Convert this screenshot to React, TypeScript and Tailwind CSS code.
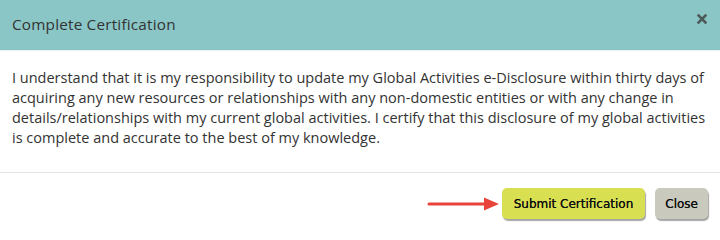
import React from "react";

export default function App() {
  return (
    <div className="w-[720px] h-[234px] bg-white overflow-hidden" style={{ fontFamily: '"Open Sans", sans-serif' }}>
      <div className="h-[51px] bg-[#8ac6c6] flex items-center justify-between pl-3 pr-[12px] border-b border-[#e8f0f0]">
        <h1 className="text-[15.3px] text-[#333] font-normal tracking-[0.2px] -mt-[2px]">Complete Certification</h1>
        <svg width="10" height="10" viewBox="0 0 10 10" className="-mt-[13px] mr-[1px]">
          <path d="M1.5 1.5 L8.5 8.5 M8.5 1.5 L1.5 8.5" stroke="#4d5a5a" strokeWidth="2.6" strokeLinecap="square" />
        </svg>
      </div>
      <div className="px-3 pt-[17px] h-[122px] border-b border-[#e5e5e5] text-[14.5px] leading-[20px] text-[#333] whitespace-nowrap">
        I understand that it is my responsibility to update my Global Activities e-Disclosure within thirty days of<br />
        acquiring any new resources or relationships with any non-domestic entities or with any change in<br />
        details/relationships with my current global activities. I certify that this disclosure of my global activities<br />
        is complete and accurate to the best of my knowledge.
      </div>
      <div className="flex items-center justify-end pr-3 pt-[15px] gap-[10px]" style={{ fontFamily: '"DejaVu Sans", sans-serif' }}>
        <svg width="74" height="16" viewBox="0 0 74 16" className="-mr-[9px]">
          <line x1="2" y1="8" x2="60" y2="8" stroke="#e8443a" strokeWidth="3" strokeLinecap="round" />
          <polygon points="57,1.5 72,8 57,14.5" fill="#e8443a" />
        </svg>
        <button className="h-[31px] px-[12px] rounded-[5px] bg-[#d8e052] text-[#111] text-[12px] font-normal shadow-[1px_2px_1px_rgba(0,0,0,0.35)] [text-shadow:0_0_0.4px_#111]">
          Submit Certification
        </button>
        <button className="h-[31px] px-[10px] rounded-[5px] bg-[#c9c9bd] text-[#111] text-[12px] font-normal shadow-[1px_2px_1px_rgba(0,0,0,0.35)] [text-shadow:0_0_0.4px_#111]">
          Close
        </button>
      </div>
    </div>
  );
}
